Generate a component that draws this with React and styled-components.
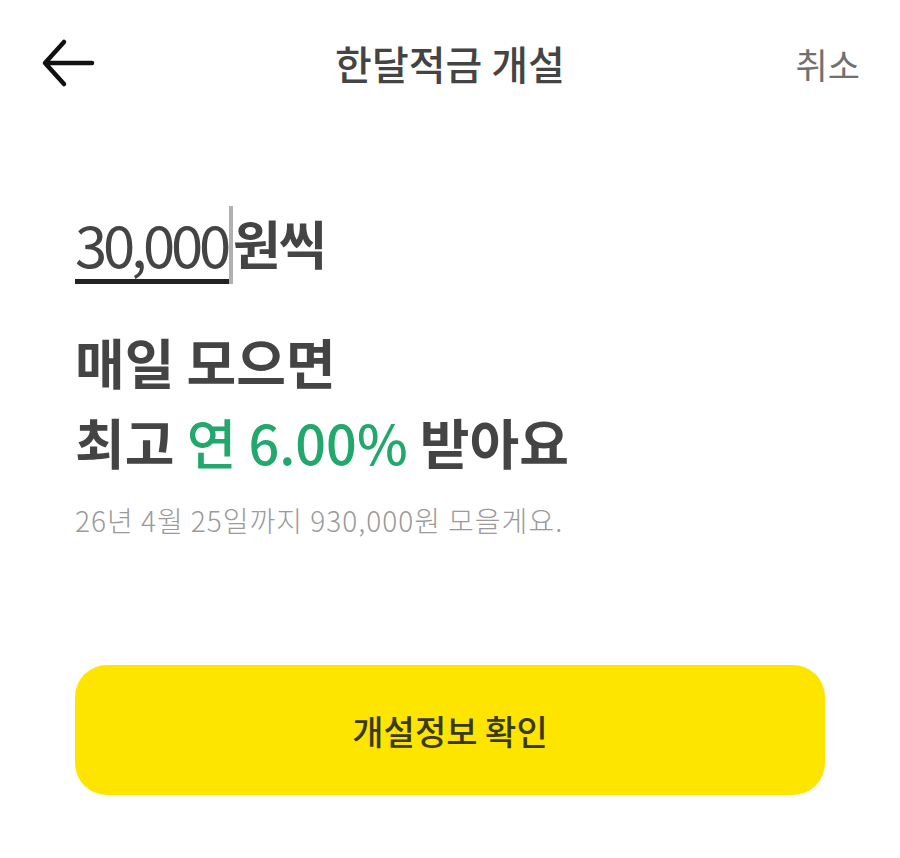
import React from 'react';
import styled, { createGlobalStyle } from 'styled-components';

const GlobalStyle = createGlobalStyle`
  html, body {
    margin: 0;
    padding: 0;
    background: #ffffff;
  }
  body {
    font-family: "Noto Sans CJK KR", "Noto Sans", sans-serif;
    color: #444444;
  }
`;

const Screen = styled.div`
  width: 900px;
  height: 858px;
  display: flex;
  flex-direction: column;
  background: #fff;
`;

const Header = styled.header`
  height: 130px;
  display: grid;
  grid-template-columns: 160px 1fr 160px;
  align-items: center;
  padding: 0 40px 0 40px;
  box-sizing: border-box;
  margin-top: -2px;
`;

const BackButton = styled.button`
  background: none;
  border: none;
  padding: 0;
  width: 56px;
  height: 56px;
  cursor: pointer;
  display: flex;
  align-items: center;
`;

const Title = styled.h1`
  margin: 0;
  text-align: center;
  font-size: 40px;
  font-weight: 500;
  color: #444;
`;

const Cancel = styled.button`
  justify-self: end;
  background: none;
  border: none;
  padding: 0;
  font-family: inherit;
  font-size: 35px;
  font-weight: 400;
  color: #707070;
  cursor: pointer;
`;

const Body = styled.main`
  padding: 76px 0 0 75px;
  display: flex;
  flex-direction: column;
`;

const AmountRow = styled.div`
  display: flex;
  align-items: flex-end;
  height: 80px;
`;

const AmountValue = styled.span`
  font-size: 58px;
  line-height: 72px;
  letter-spacing: -4.2px;
  color: #444;
  border-bottom: 5px solid #222;
  padding-right: 2px;
`;

const Caret = styled.span`
  width: 4px;
  height: 78px;
  background: #b0b0b0;
  align-self: flex-end;
`;

const Unit = styled.span`
  font-size: 52px;
  font-weight: 700;
  line-height: 72px;
  margin-bottom: 5px;
  letter-spacing: -2px;
  color: #444;
`;

const Headline = styled.h2`
  margin: 38px 0 0 0;
  font-size: 54px;
  font-weight: 700;
  line-height: 80px;
  color: #444;
  letter-spacing: 0;
`;

const Rate = styled.span`
  color: #22a86c;
  font-weight: 500;
`;

const Note = styled.p`
  margin: 18px 0 0 0;
  font-size: 28px;
  font-weight: 300;
  color: #9a9a9a;
  letter-spacing: 1px;
`;

const Footer = styled.div`
  padding: 0 75px;
  margin-top: 125px;
`;

const ConfirmButton = styled.button`
  width: 100%;
  height: 130px;
  border: none;
  border-radius: 32px;
  background: #fee500;
  font-family: inherit;
  font-size: 34px;
  font-weight: 500;
  color: #3a3a1a;
  cursor: pointer;
`;

function BackArrow() {
  return (
    <svg width="56" height="56" viewBox="0 0 56 56" fill="none">
      <path
        d="M52 28H6M24 7L5 28L24 49"
        stroke="#111"
        strokeWidth="4.5"
        strokeLinecap="round"
        strokeLinejoin="round"
      />
    </svg>
  );
}

export default function App() {
  return (
    <>
      <GlobalStyle />
      <Screen>
        <Header>
          <BackButton aria-label="뒤로">
            <BackArrow />
          </BackButton>
          <Title>한달적금 개설</Title>
          <Cancel>취소</Cancel>
        </Header>
        <Body>
          <AmountRow>
            <AmountValue>30,000</AmountValue>
            <Caret />
            <Unit>원씩</Unit>
          </AmountRow>
          <Headline>
            매일 모으면
            <br />
            최고 <Rate>연 6.00%</Rate> 받아요
          </Headline>
          <Note>26년 4월 25일까지 930,000원 모을게요.</Note>
        </Body>
        <Footer>
          <ConfirmButton>개설정보 확인</ConfirmButton>
        </Footer>
      </Screen>
    </>
  );
}
